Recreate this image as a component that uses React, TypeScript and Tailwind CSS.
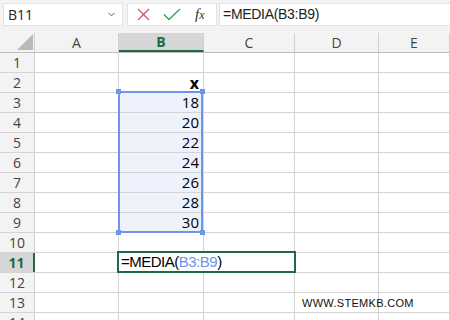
import { ChevronDown } from 'lucide-react';

const cols = [
  { name: 'A', w: 'w-[84px]' },
  { name: 'B', w: 'w-[85px]' },
  { name: 'C', w: 'w-[91px]' },
  { name: 'D', w: 'w-[84px]' },
  { name: 'E', w: 'flex-1' },
];

const values: Record<number, string> = { 3: '18', 4: '20', 5: '22', 6: '24', 7: '26', 8: '28', 9: '30' };

function Cell({ row, col }: { row: number; col: number }) {
  const inRange = col === 1 && row >= 3 && row <= 9;
  let content: React.ReactNode = null;
  if (col === 1 && row === 2) content = <span className="font-bold text-[16px]">x</span>;
  if (col === 1 && values[row]) content = values[row];
  return (
    <div
      className={`${cols[col].w} h-full border-r border-[#d4d4d4] flex items-center justify-end pr-[4px] text-[15px] text-black ${
        inRange ? 'bg-[#eef2fc]' : 'bg-white'
      }`}
    >
      {content}
    </div>
  );
}

export default function App() {
  const rows = Array.from({ length: 14 }, (_, i) => i + 1);
  return (
    <div className="relative w-[450px] h-[320px] overflow-hidden bg-white font-['Open_Sans','Noto_Sans',sans-serif]">
      {/* formula bar */}
      <div className="h-[33px] bg-[#f3f3f3] flex items-start pt-[3px] pl-[3px]">
        <div className="w-[120px] h-[23px] bg-white border border-[#e3e3e3] flex items-center justify-between pl-[4px] pr-[5px] text-[14px] text-[#222]">
          <span>B11</span>
          <ChevronDown size={11} strokeWidth={2} className="text-[#555]" />
        </div>
        <div className="ml-[4px] w-[90px] h-[23px] bg-white border border-[#e3e3e3] flex items-center pl-[9px]">
          <svg width="13" height="13" viewBox="0 0 13 13">
            <path d="M1 1 L12 12 M12 1 L1 12" stroke="#e8494c" strokeWidth="1.2" fill="none" />
          </svg>
          <svg width="18" height="13" viewBox="0 0 18 13" className="ml-[13px]">
            <path d="M1 6.5 L6 11.5 L17 1" stroke="#3a9c4f" strokeWidth="1.3" fill="none" />
          </svg>
          <span className="ml-[14px] text-[15px] italic text-[#333] font-['Liberation_Serif',serif] leading-none">
            f<span className="text-[12px]">x</span>
          </span>
        </div>
        <div className="ml-[2px] flex-1 h-[23px] bg-white border border-[#e3e3e3] border-r-0 flex items-center pl-[3px] text-[14px] tracking-[-0.3px] text-[#222] font-['Liberation_Sans',sans-serif]">
          =MEDIA(B3:B9)
        </div>
      </div>

      {/* column headers */}
      <div className="flex h-[20px] bg-[#f3f3f3] border-b border-[#bdbdbd]">
        <div className="w-[35px] h-full border-r border-[#d0d0d0] relative">
          <svg width="16" height="16" viewBox="0 0 16 16" className="absolute left-[17px] top-[1px]">
            <path d="M16 0 L16 16 L0 16 Z" fill="#b9b9b9" />
          </svg>
        </div>
        {cols.map((c, i) => (
          <div
            key={c.name}
            className={`${c.w} h-full flex items-center justify-center text-[14px] ${
              i === 1
                ? 'bg-[#d6d6d6] text-[#1e6b41] font-bold border-b-2 border-[#1e6b41] border-r border-r-[#d0d0d0]'
                : 'text-[#444] border-r border-[#d0d0d0]'
            }`}
          >
            {c.name}
          </div>
        ))}
      </div>

      {/* rows */}
      {rows.map((r) => (
        <div key={r} className="flex h-[20px] border-b border-[#d4d4d4]">
          <div
            className={`w-[35px] h-full flex items-center justify-center text-[14px] ${
              r === 11
                ? 'bg-[#d6d6d6] text-[#1e6b41] font-bold border-r-2 border-[#1e6b41]'
                : 'bg-[#f3f3f3] text-[#444] border-r border-[#d0d0d0]'
            }`}
          >
            {r}
          </div>
          {cols.map((c, i) => (
            <Cell key={c.name} row={r} col={i} />
          ))}
        </div>
      ))}

      {/* selection range B3:B9 */}
      <div className="absolute left-[118px] top-[91px] w-[85px] h-[142px] border-2 border-[#6d95e8] pointer-events-none" />
      <div className="absolute left-[116px] top-[89px] w-[5px] h-[5px] bg-[#6d95e8]" />
      <div className="absolute left-[200px] top-[89px] w-[5px] h-[5px] bg-[#6d95e8]" />
      <div className="absolute left-[116px] top-[230px] w-[5px] h-[5px] bg-[#6d95e8]" />
      <div className="absolute left-[200px] top-[230px] w-[5px] h-[5px] bg-[#6d95e8]" />

      {/* active editing cell B11 */}
      <div className="absolute left-[117px] top-[251px] w-[179px] h-[22px] border-2 border-[#1e6b41] bg-white flex items-center pl-[2px] text-[15px] tracking-[-0.5px] text-black font-['Liberation_Sans',sans-serif]">
        =MEDIA(<span className="text-[#6d95e8]">B3:B9</span>)
      </div>

      {/* watermark */}
      <div className="absolute left-[302px] top-[295px] text-[11px] tracking-[0.3px] text-[#111] font-['Liberation_Sans',sans-serif]">
        WWW.STEMKB.COM
      </div>
    </div>
  );
}
